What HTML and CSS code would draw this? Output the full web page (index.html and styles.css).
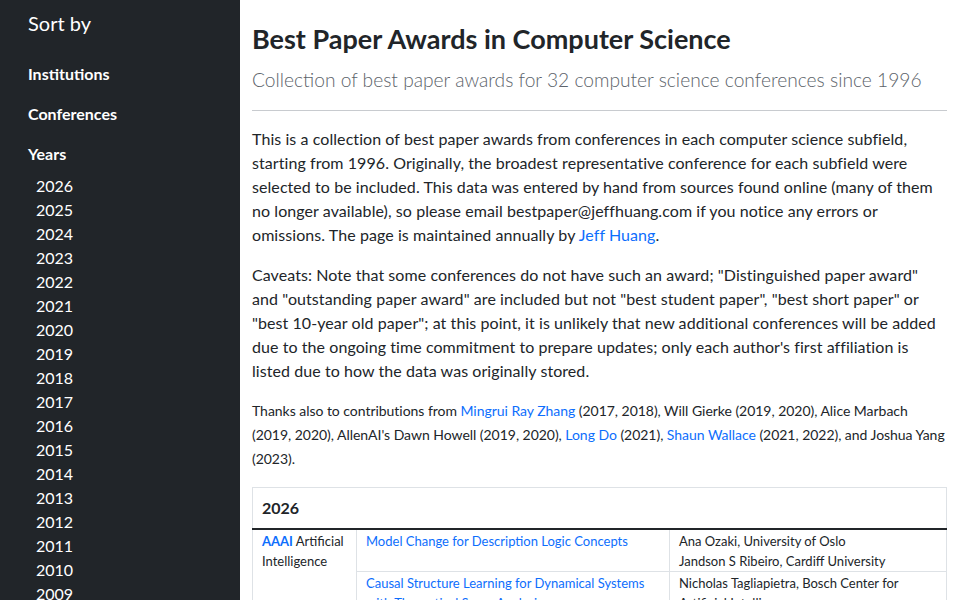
FILE: index.html
```html
<!DOCTYPE html>
<html lang="en">
<head>
<meta charset="utf-8">
<title>Best Paper Awards in Computer Science</title>
<link rel="stylesheet" href="styles.css">
</head>
<body>
<div class="layout">
  <nav class="sidebar">
    <div class="sidebar-title">Sort by</div>
    <a class="nav-head" href="#institutions">Institutions</a>
    <a class="nav-head" href="#conferences">Conferences</a>
    <a class="nav-head" href="#years">Years</a>
    <ul class="year-list">
      <li><a href="#2026">2026</a></li>
      <li><a href="#2025">2025</a></li>
      <li><a href="#2024">2024</a></li>
      <li><a href="#2023">2023</a></li>
      <li><a href="#2022">2022</a></li>
      <li><a href="#2021">2021</a></li>
      <li><a href="#2020">2020</a></li>
      <li><a href="#2019">2019</a></li>
      <li><a href="#2018">2018</a></li>
      <li><a href="#2017">2017</a></li>
      <li><a href="#2016">2016</a></li>
      <li><a href="#2015">2015</a></li>
      <li><a href="#2014">2014</a></li>
      <li><a href="#2013">2013</a></li>
      <li><a href="#2012">2012</a></li>
      <li><a href="#2011">2011</a></li>
      <li><a href="#2010">2010</a></li>
      <li><a href="#2009">2009</a></li>
      <li><a href="#2008">2008</a></li>
      <li><a href="#2007">2007</a></li>
    </ul>
  </nav>

  <main class="content">
    <h1 class="title">Best Paper Awards in Computer Science</h1>
    <p class="lead">Collection of best paper awards for 32 computer science conferences since 1996</p>
    <hr class="rule">

    <p>This is a collection of best paper awards from conferences in each computer science subfield, starting from 1996. Originally, the broadest representative conference for each subfield were selected to be included. This data was entered by hand from sources found online (many of them no longer available), so please email bestpaper@jeffhuang.com if you notice any errors or omissions. The page is maintained annually by <a href="#jeff">Jeff Huang</a>.</p>

    <p>Caveats: Note that some conferences do not have such an award; "Distinguished paper award" and "outstanding paper award" are included but not "best student paper", "best short paper" or "best 10-year old paper"; at this point, it is unlikely that new additional conferences will be added due to the ongoing time commitment to prepare updates; only each author's first affiliation is listed due to how the data was originally stored.</p>

    <p class="thanks">Thanks also to contributions from <a href="#mrz">Mingrui Ray Zhang</a> (2017, 2018), Will Gierke (2019, 2020), Alice Marbach (2019, 2020), AllenAI's Dawn Howell (2019, 2020), <a href="#ld">Long Do</a> (2021), <a href="#sw">Shaun Wallace</a> (2021, 2022), and Joshua Yang (2023).</p>

    <table class="awards">
      <colgroup>
        <col class="col-conf">
        <col class="col-paper">
        <col class="col-authors">
      </colgroup>
      <thead>
        <tr><th colspan="3" class="year-head">2026</th></tr>
      </thead>
      <tbody>
        <tr>
          <td rowspan="3" class="conf-cell"><a class="conf" href="#aaai">AAAI</a> Artificial Intelligence</td>
          <td><a href="#p1">Model Change for Description Logic Concepts</a></td>
          <td>
            <div>Ana Ozaki, University of Oslo</div>
            <div>Jandson S Ribeiro, Cardiff University</div>
          </td>
        </tr>
        <tr>
          <td><a href="#p2">Causal Structure Learning for Dynamical Systems with Theoretical Score Analysis</a></td>
          <td>
            <div>Nicholas Tagliapietra, Bosch Center for Artificial Intelligence</div>
            <div>Juergen Luettin, Bosch Center for Artificial Intelligence</div>
          </td>
        </tr>
        <tr>
          <td><a href="#p3">Efficient Search for Optimal Plans</a></td>
          <td>
            <div>Lukas Schaller, University of Freiburg</div>
          </td>
        </tr>
      </tbody>
    </table>
  </main>
</div>
</body>
</html>
```
FILE: styles.css
```css
* {
  box-sizing: border-box;
}

html, body {
  margin: 0;
  padding: 0;
}

body {
  font-family: Lato, "Open Sans", "Noto Sans", sans-serif;
  font-size: 16px;
  line-height: 24px;
  color: #212529;
  background: #fff;
}

a {
  color: #0d6efd;
  text-decoration: none;
}

/* two-column shell: dark sort menu + reading column */
.layout {
  display: flex;
  min-height: 100vh;
}

.sidebar {
  flex: 0 0 240px;
  width: 240px;
  background: #212529;
  color: #fff;
  padding: 11px 12px 0 28px;
  display: flex;
  flex-direction: column;
  align-items: flex-start;
}

.sidebar-title {
  font-size: 20px;
  line-height: 24px;
  margin-bottom: 19px;
}

.nav-head {
  color: #fff;
  font-weight: 700;
  padding: 8px 0;
  line-height: 24px;
}

.year-list {
  list-style: none;
  margin: 0;
  padding: 0 0 0 8px;
}

.year-list li {
  line-height: 24px;
}

.year-list a {
  color: #fff;
}

/* main reading column */
.content {
  flex: 1;
  min-width: 0;
  padding: 23px 13px 0 12px;
}

.title {
  font-size: 27px;
  line-height: 32px;
  font-weight: 700;
  margin: 0 0 10px;
}

.lead {
  font-size: 19.2px;
  line-height: 30px;
  font-weight: 300;
  color: #5c636a;
  margin: 0;
}

.rule {
  border: 0;
  border-top: 1px solid #c8cbcf;
  margin: 15px 0 16px;
  height: 0;
}

.content p {
  margin: 0 0 16px;
  letter-spacing: 0.07px;
}

.content p.lead {
  margin: 0;
  letter-spacing: 0;
}

.content p.thanks {
  font-size: 14px;
  line-height: 24px;
  letter-spacing: -0.035px;
}

/* awards table */
.awards {
  width: 100%;
  border-collapse: collapse;
  table-layout: fixed;
  border: 1px solid #dee2e6;
  font-size: 13px;
  line-height: 20px;
}

.col-conf {
  width: 104px;
}

.col-paper {
  width: 313px;
}

.year-head {
  text-align: left;
  font-size: 16px;
  line-height: 24px;
  font-weight: 700;
  padding: 8px 9px;
  border-bottom: 2px solid #212529;
}

.awards td {
  vertical-align: top;
  border: 1px solid #dee2e6;
  padding: 1px 8px 0 9px;
}

.awards td.conf-cell {
  padding-right: 4px;
}

.conf {
  font-weight: 700;
}
```
